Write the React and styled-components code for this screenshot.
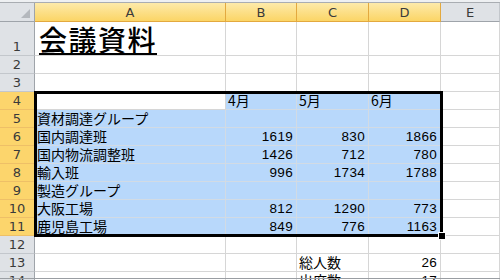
import styled, { createGlobalStyle, css } from 'styled-components';

const GlobalStyle = createGlobalStyle`
  html, body {
    margin: 0;
    padding: 0;
    background: #fff;
    overflow: hidden;
  }
`;

const COLS = ['A', 'B', 'C', 'D', 'E'];
const SELECTED_COLS = ['A', 'B', 'C', 'D'];

// row number -> cells [A, B, C, D, E]
const ROWS = [
  { n: 1, cells: [{ v: '会議資料', title: true }] },
  { n: 2, cells: [] },
  { n: 3, cells: [] },
  { n: 4, cells: [{ v: '' }, { v: '4月' }, { v: '5月' }, { v: '6月' }] },
  { n: 5, cells: [{ v: '資材調達グループ' }] },
  { n: 6, cells: [{ v: '国内調達班' }, { v: 1619, num: true }, { v: 830, num: true }, { v: 1866, num: true }] },
  { n: 7, cells: [{ v: '国内物流調整班' }, { v: 1426, num: true }, { v: 712, num: true }, { v: 780, num: true }] },
  { n: 8, cells: [{ v: '輸入班' }, { v: 996, num: true }, { v: 1734, num: true }, { v: 1788, num: true }] },
  { n: 9, cells: [{ v: '製造グループ' }] },
  { n: 10, cells: [{ v: '大阪工場' }, { v: 812, num: true }, { v: 1290, num: true }, { v: 773, num: true }] },
  { n: 11, cells: [{ v: '鹿児島工場' }, { v: 849, num: true }, { v: 776, num: true }, { v: 1163, num: true }] },
  { n: 12, cells: [] },
  { n: 13, cells: [{ v: '' }, { v: '' }, { v: '総人数' }, { v: 26, num: true }] },
  { n: 14, cells: [{ v: '' }, { v: '' }, { v: '出席数' }, { v: 17, num: true }] },
];

const isSelected = (row, colIdx) => row >= 4 && row <= 11 && colIdx <= 3;

const Sheet = styled.div`
  position: relative;
  width: 500px;
  height: 280px;
  overflow: hidden;
  background: #fff;
`;

const TopStrip = styled.div`
  height: 2px;
  background: #eef0f2;
  border-bottom: 1px solid #a9adb2;
`;

const Grid = styled.div`
  display: grid;
  grid-template-columns: 35px 191px 71px 72px 72px 59px;
  grid-template-rows: 19px 34px;
  grid-auto-rows: 18px;
`;

const headerBase = css`
  box-sizing: border-box;
  display: flex;
  align-items: center;
  justify-content: center;
  font-family: "DejaVu Sans", "Liberation Sans", sans-serif;
  font-size: 13px;
  color: #3a3a3a;
`;

const Corner = styled.div`
  ${headerBase};
  position: relative;
  background: #dfe2e6;
  border-right: 1px solid #9fa4aa;
  border-bottom: 1px solid #9fa4aa;

  &::after {
    content: '';
    position: absolute;
    right: 4px;
    bottom: 3px;
    border-left: 9px solid transparent;
    border-bottom: 9px solid #b4b8bd;
  }
`;

const ColHeader = styled.div`
  ${headerBase};
  padding-top: 1px;
  ${({ $selected }) => $selected
    ? css`
      background: linear-gradient(#fdeaaa, #fbd566);
      border-right: 1px solid #e3a93f;
      border-bottom: 1px solid #e3a93f;
    `
    : css`
      background: #dfe2e6;
      border-right: 1px solid #c3c7cc;
      border-bottom: 1px solid #9fa4aa;
    `}
`;

const RowHeader = styled.div`
  ${headerBase};
  align-items: flex-end;
  padding-bottom: 1px;
  ${({ $selected }) => $selected
    ? css`
      background: #fcd56c;
      border-right: 1px solid #e3a93f;
      border-bottom: 1px solid #eec067;
    `
    : css`
      background: #dfe2e6;
      border-right: 1px solid #9fa4aa;
      border-bottom: 1px solid #c3c7cc;
    `}
`;

const Cell = styled.div`
  box-sizing: border-box;
  display: flex;
  align-items: flex-end;
  justify-content: ${({ $num }) => ($num ? 'flex-end' : 'flex-start')};
  padding: 0 3px 0 2px;
  border-right: 1px solid ${({ $selected }) => ($selected ? '#d2dbe4' : '#d6d6d6')};
  border-bottom: 1px solid ${({ $selected }) => ($selected ? '#d2dbe4' : '#d6d6d6')};
  background: ${({ $selected }) => ($selected ? '#b8d8fb' : '#fff')};
  font-family: ${({ $num }) => ($num
    ? '"Liberation Sans", Arial, sans-serif'
    : '"Noto Sans CJK JP", "Liberation Sans", sans-serif')};
  font-size: ${({ $num }) => ($num ? '13.5px' : '14px')};
  letter-spacing: ${({ $num }) => ($num ? '0.3px' : '0')};
  line-height: 17px;
  color: #000;
  white-space: nowrap;
  overflow: visible;
`;

const Title = styled.span`
  font-family: "Noto Sans CJK JP", sans-serif;
  font-size: 28px;
  font-weight: 500;
  line-height: 30px;
  letter-spacing: 1.5px;
  text-decoration: underline;
  text-decoration-thickness: 2px;
  text-underline-offset: 2px;
  padding-left: 2px;
  margin-bottom: 1px;
`;

const Selection = styled.div`
  position: absolute;
  left: 34px;
  top: 91px;
  width: 409px;
  height: 146px;
  box-sizing: border-box;
  border: 3px solid #000;
  pointer-events: none;
`;

const FillHandle = styled.div`
  position: absolute;
  left: 439px;
  top: 233px;
  width: 6px;
  height: 6px;
  box-sizing: border-box;
  background: #000;
  outline: 1px solid #fff;
`;

const BottomEdge = styled.div`
  position: absolute;
  left: 0;
  right: 0;
  bottom: 1px;
  height: 1px;
  background: #9a9ea3;
`;

export default function App() {
  return (
    <Sheet>
      <GlobalStyle />
      <TopStrip />
      <Grid>
        <Corner />
        {COLS.map((c) => (
          <ColHeader key={c} $selected={SELECTED_COLS.includes(c)}>{c}</ColHeader>
        ))}
        {ROWS.map((row) => (
          [
            <RowHeader key={`h${row.n}`} $selected={row.n >= 4 && row.n <= 11}>
              {row.n}
            </RowHeader>,
            ...COLS.map((c, i) => {
              const cell = row.cells[i] || {};
              const active = row.n === 4 && i === 0;
              return (
                <Cell
                  key={`${c}${row.n}`}
                  $num={cell.num}
                  $selected={isSelected(row.n, i) && !active}
                >
                  {cell.title ? <Title>{cell.v}</Title> : cell.v}
                </Cell>
              );
            }),
          ]
        ))}
      </Grid>
      <Selection />
      <FillHandle />
      <BottomEdge />
    </Sheet>
  );
}
